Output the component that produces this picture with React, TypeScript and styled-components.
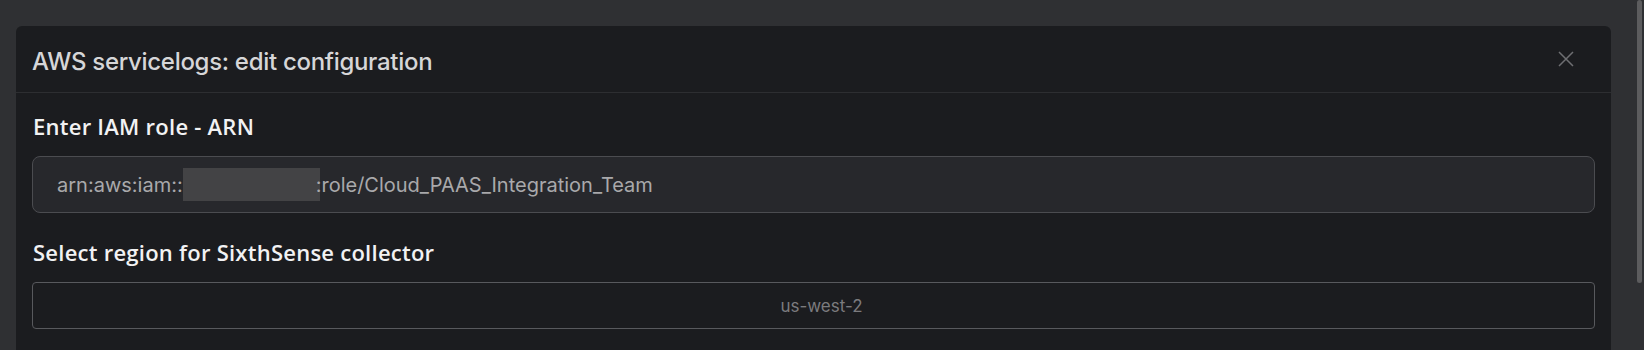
import styled, { createGlobalStyle } from "styled-components";

const GlobalStyle = createGlobalStyle`
  html, body {
    margin: 0;
    padding: 0;
    background: #2f3033;
    overflow: hidden;
  }
  body {
    font-family: Inter, "Liberation Sans", sans-serif;
  }
`;

const Page = styled.div`
  display: flex;
  height: 350px;
  padding-top: 26px;
  box-sizing: border-box;
`;

const Main = styled.div`
  flex: 1;
  padding-left: 16px;
  padding-right: 33px;
`;

const ScrollTrack = styled.div`
  position: fixed;
  top: 0;
  right: 2px;
  width: 5px;
`;

const ScrollThumb = styled.div`
  width: 5px;
  height: 283px;
  border-radius: 3px;
  background: #5c5c5e;
`;

const Modal = styled.div`
  background: #1b1c1f;
  border-radius: 6px 6px 0 0;
  min-height: 400px;
`;

const Header = styled.div`
  display: flex;
  align-items: center;
  justify-content: space-between;
  height: 67px;
  padding: 4px 37px 0 16px;
  box-sizing: border-box;
  border-bottom: 1px solid #2d2e31;
`;

const Title = styled.h2`
  margin: 0;
  font-family: Inter, "Liberation Sans", sans-serif;
  font-size: 24px;
  font-weight: 500;
  color: #d6d6d8;
  letter-spacing: -0.3px;
`;

const CloseButton = styled.button`
  display: flex;
  align-items: center;
  justify-content: center;
  width: 16px;
  height: 16px;
  margin-top: -4px;
  padding: 0;
  border: none;
  background: none;
  color: #6e6f72;
  cursor: pointer;
`;

const Body = styled.div`
  display: flex;
  flex-direction: column;
  padding: 18px 16px 0 16px;
`;

const Field = styled.div`
  display: flex;
  flex-direction: column;
  gap: 15px;
  margin-bottom: 24px;
`;

const Label = styled.label`
  padding-left: 1px;
  font-family: "Open Sans", "Noto Sans", sans-serif;
  font-size: 22px;
  line-height: 30px;
  font-weight: 600;
  color: #f2f2f3;
  letter-spacing: 0.25px;
`;

const TextBox = styled.div`
  display: flex;
  align-items: center;
  height: 57px;
  padding: 0 24px;
  box-sizing: border-box;
  background: #27282c;
  border: 1px solid #4b4c50;
  border-radius: 8px;
  font-family: Inter, "Liberation Sans", sans-serif;
  font-size: 20px;
  color: #a9a9ab;
  white-space: pre;
`;

const Redacted = styled.span`
  display: inline-block;
  width: 137px;
  height: 33px;
  margin-right: -4px;
  background: #434345;
`;

const SelectBox = styled.div<{ $muted?: boolean }>`
  display: flex;
  align-items: center;
  justify-content: center;
  height: 47px;
  padding-left: 16px;
  box-sizing: border-box;
  background: #1b1c1f;
  border: 1px solid #58595d;
  border-radius: 4px;
  font-family: Inter, "Liberation Sans", sans-serif;
  font-size: 17px;
  color: ${(p) => (p.$muted ? "#7b7b7e" : "#c8c8ca")};
`;

function CloseIcon() {
  return (
    <svg width="16" height="16" viewBox="0 0 16 16" fill="none">
      <path d="M1 1L15 15M15 1L1 15" stroke="currentColor" strokeWidth="1.5" />
    </svg>
  );
}

export default function App() {
  return (
    <>
      <GlobalStyle />
      <Page>
        <Main>
          <Modal>
            <Header>
              <Title>AWS servicelogs: edit configuration</Title>
              <CloseButton aria-label="Close">
                <CloseIcon />
              </CloseButton>
            </Header>
            <Body>
              <Field>
                <Label>Enter IAM role - ARN</Label>
                <TextBox>
                  arn:aws:iam::<Redacted />:role/Cloud_PAAS_Integration_Team
                </TextBox>
              </Field>
              <Field>
                <Label>Select region for SixthSense collector</Label>
                <SelectBox $muted>us-west-2</SelectBox>
              </Field>
            </Body>
          </Modal>
        </Main>
        <ScrollTrack>
          <ScrollThumb />
        </ScrollTrack>
      </Page>
    </>
  );
}
